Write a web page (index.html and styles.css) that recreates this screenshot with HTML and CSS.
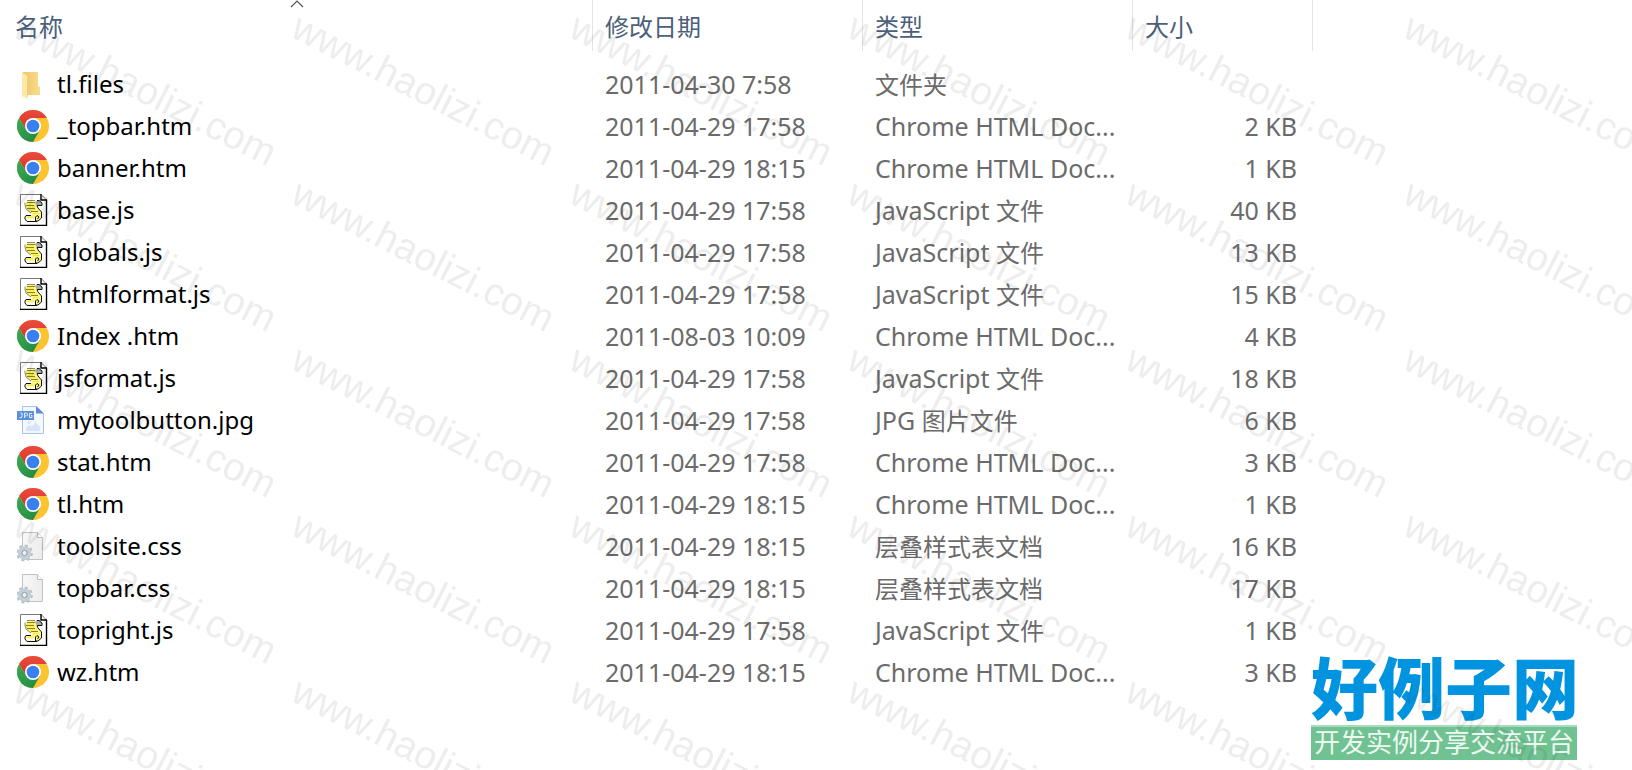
FILE: index.html
```html
<!DOCTYPE html>
<html lang="zh-CN">
<head>
<meta charset="utf-8">
<title>文件列表</title>
<link rel="stylesheet" href="styles.css">
</head>
<body>
<svg class="defs" aria-hidden="true">
  <defs>
    <linearGradient id="fold" x1="0" x2="1"><stop offset="0" stop-color="#ecc76c"/><stop offset="1" stop-color="#fbdc86"/></linearGradient>
    <linearGradient id="red" x1="0" x2="0" y1="0" y2="1"><stop offset="0" stop-color="#ea4a3d"/><stop offset="1" stop-color="#d9342a"/></linearGradient>
    <linearGradient id="green" x1="0" x2="1" y1="0" y2="1"><stop offset="0" stop-color="#3cac58"/><stop offset="1" stop-color="#1f8640"/></linearGradient>
    <linearGradient id="sheet" x1="0" x2="1"><stop offset="0" stop-color="#f8f8f8"/><stop offset="1" stop-color="#ececec"/></linearGradient>
    <symbol id="folder" viewBox="0 0 32 32">
      <path d="M6 4H21V18L23 19V27H6Z" fill="url(#fold)"/>
      <path d="M5 4 10.500 8V31L5 28Z" fill="#ffe7a6"/>
      <path d="M10.500 8V29" stroke="#e8c477" stroke-width=".6"/>
    </symbol>
    <symbol id="chrome" viewBox="0 0 32 32">
      <circle cx="16" cy="16" r="16" fill="#fcc42f"/>
      <path d="M2.140 8A16 16 0 0 1 29.860 8H16L9.070 20Z" fill="url(#red)"/>
      <path d="M2.140 8A16 16 0 0 0 16 32L22.930 20H9.070Z" fill="url(#green)"/>
      <circle cx="16" cy="16" r="8" fill="#fff"/>
      <circle cx="16" cy="16" r="6.300" fill="#3780ee"/>
    </symbol>
    <symbol id="script" viewBox="0 0 32 32">
      <path d="M3.500.500H24L29.500 6V31.500H3.500Z" fill="#fff" stroke="#777"/>
      <path d="M24 0V6H30M29.500 6V31.500H3" fill="none" stroke="#000" stroke-width="1.400"/>
      <path d="M10 7H22L19 10L21 14L24 18V24L21 27H10L9 22H14L15 20L9 16L8 11Z" fill="#fbf68a"/>
      <path d="M10 8.500H18M9 11.500H17M10 14.500H18M14 17.500H21" stroke="#8a8412"/>
      <path d="M9 10H17M9 13H17M12 16H20M16 19.500H22M10 23H16" stroke="#f5e93a"/>
      <path d="M10 24.500H18V26.500H10Z" fill="#fff"/>
      <path d="M18 8 20 6.500H22L25 9V11.500H20L19 10Z" fill="#aaa"/>
      <path d="M10 6.500H18M8 8.500V11L9 15 14 19" fill="none" stroke="#888"/>
      <path d="M20 6.500H22L25 9V11.500H20L21 14L24.500 18V24L21 27H18.500V23L20 21.500 22 23 20.500 25M14 21.500H9L8 23V25L10 27.500H20" fill="none" stroke="#111"/>
    </symbol>
    <symbol id="image" viewBox="0 0 32 32">
      <path d="M5.500 2.500H19.500L26.500 9.500V29.500H5.500Z" fill="#f5f9ff" stroke="#aac4ee"/>
      <path d="M19 2V9.500H27Z" fill="#5a8ed8"/>
      <path d="M9 27V24L12 21L15 22.500 18.500 18 23 23V27Z" fill="#d5e4fa"/><circle cx="12" cy="18.500" r="1.500" fill="#d5e4fa"/>
      <path d="M0 7H17V16H0Z" fill="#5a90dc"/>
      <path d="M3.500 9H5V13L4 14 2.500 13.500M7.500 14V9H9.500L10.500 10V11L9.500 12H7.500M15 9.500H12.500V13.500H15V11.500H14" fill="none" stroke="#e2eeff"/>
    </symbol>
    <symbol id="style" viewBox="0 0 32 32">
      <path d="M5.500 2.500H20.500L25.500 7.500V29.500H5.500Z" fill="url(#sheet)" stroke="#c2c2c2"/>
      <path d="M20.500 2.500V7.500H25.500" fill="#fff" stroke="#bbb"/>
      <circle cx="7.500" cy="23" r="7" fill="none" stroke="#b9c5cd" stroke-width="3" stroke-dasharray="3 2.500"/>
      <circle cx="7.500" cy="23" r="4.700" fill="none" stroke="#c3ced5" stroke-width="4"/>
      <circle cx="7.500" cy="23" r="2.600" fill="#eef1f3" stroke="#8b9aa5"/>
    </symbol>
  </defs>
</svg>

<main class="listing">
<table class="files">
  <colgroup><col class="col-name"><col class="col-date"><col class="col-type"><col class="col-size"><col></colgroup>
  <thead>
    <tr>
      <th aria-sort="ascending"><button class="sort" type="button">名称</button><svg class="arrow" viewBox="0 0 14 8" aria-hidden="true"><path d="M1 7 7 1 13 7"/></svg></th>
      <th><button class="sort" type="button">修改日期</button></th>
      <th><button class="sort" type="button">类型</button></th>
      <th><button class="sort" type="button">大小</button></th>
      <th class="rest"></th>
    </tr>
  </thead>
  <tbody>
    <tr><td><div class="file"><svg><use href="#folder"/></svg>tl.files</div></td><td>2011-04-30 7:58</td><td><span class="cjk">文件夹</span></td><td></td></tr>
    <tr><td><div class="file"><svg><use href="#chrome"/></svg>_topbar.htm</div></td><td>2011-04-29 17:58</td><td>Chrome HTML Doc...</td><td>2 KB</td></tr>
    <tr><td><div class="file"><svg><use href="#chrome"/></svg>banner.htm</div></td><td>2011-04-29 18:15</td><td>Chrome HTML Doc...</td><td>1 KB</td></tr>
    <tr><td><div class="file"><svg><use href="#script"/></svg>base.js</div></td><td>2011-04-29 17:58</td><td>JavaScript <span class="cjk">文件</span></td><td>40 KB</td></tr>
    <tr><td><div class="file"><svg><use href="#script"/></svg>globals.js</div></td><td>2011-04-29 17:58</td><td>JavaScript <span class="cjk">文件</span></td><td>13 KB</td></tr>
    <tr><td><div class="file"><svg><use href="#script"/></svg>htmlformat.js</div></td><td>2011-04-29 17:58</td><td>JavaScript <span class="cjk">文件</span></td><td>15 KB</td></tr>
    <tr><td><div class="file"><svg><use href="#chrome"/></svg>Index .htm</div></td><td>2011-08-03 10:09</td><td>Chrome HTML Doc...</td><td>4 KB</td></tr>
    <tr><td><div class="file"><svg><use href="#script"/></svg>jsformat.js</div></td><td>2011-04-29 17:58</td><td>JavaScript <span class="cjk">文件</span></td><td>18 KB</td></tr>
    <tr><td><div class="file"><svg><use href="#image"/></svg>mytoolbutton.jpg</div></td><td>2011-04-29 17:58</td><td>JPG <span class="cjk">图片文件</span></td><td>6 KB</td></tr>
    <tr><td><div class="file"><svg><use href="#chrome"/></svg>stat.htm</div></td><td>2011-04-29 17:58</td><td>Chrome HTML Doc...</td><td>3 KB</td></tr>
    <tr><td><div class="file"><svg><use href="#chrome"/></svg>tl.htm</div></td><td>2011-04-29 18:15</td><td>Chrome HTML Doc...</td><td>1 KB</td></tr>
    <tr><td><div class="file"><svg><use href="#style"/></svg>toolsite.css</div></td><td>2011-04-29 18:15</td><td><span class="cjk">层叠样式表文档</span></td><td>16 KB</td></tr>
    <tr><td><div class="file"><svg><use href="#style"/></svg>topbar.css</div></td><td>2011-04-29 18:15</td><td><span class="cjk">层叠样式表文档</span></td><td>17 KB</td></tr>
    <tr><td><div class="file"><svg><use href="#script"/></svg>topright.js</div></td><td>2011-04-29 17:58</td><td>JavaScript <span class="cjk">文件</span></td><td>1 KB</td></tr>
    <tr><td><div class="file"><svg><use href="#chrome"/></svg>wz.htm</div></td><td>2011-04-29 18:15</td><td>Chrome HTML Doc...</td><td>3 KB</td></tr>
  </tbody>
</table>
<div class="brand"><div class="brand-name">好例子网</div><div class="brand-tag">开发实例分享交流平台</div></div>
<svg class="watermark" aria-hidden="true">
  <defs><pattern id="mark" x="7" y="10" width="278" height="166" patternUnits="userSpaceOnUse"><text class="mark-text" transform="translate(4 26) rotate(27)">www.haolizi.com</text></pattern></defs>
  <rect width="100%" height="100%" fill="url(#mark)"/>
</svg>
</main>
</body>
</html>
```
FILE: styles.css
```css
* { box-sizing: border-box; }
body {
  margin: 0;
  background: #fff;
  color: #6b6b6b;
  font: 25px/42px "Noto Sans", "Noto Sans CJK SC", sans-serif;
}
.defs { position: absolute; width: 0; height: 0; }
.listing { position: relative; min-height: 100vh; overflow: hidden; }
.files { width: 100%; table-layout: fixed; border-collapse: separate; border-spacing: 0; }
.col-name { width: 593px; }
.col-date, .col-type { width: 270px; }
.col-size { width: 180px; }
.files th {
  position: relative;
  height: 51px;
  padding: 0;
  border-right: 1px solid #e3e3e3;
}
.files .rest { border-right: 0; }
.sort {
  display: block;
  width: 100%;
  height: 51px;
  padding: 0 12px;
  border: 0;
  background: none;
  color: #4c607a;
  font: 24px/42px "Noto Sans CJK SC", sans-serif;
  text-align: left;
}
th:first-child .sort { padding-left: 15px; }
.arrow {
  position: absolute;
  top: 0;
  left: 50%;
  width: 14px;
  height: 8px;
  margin-left: -6px;
  fill: none;
  stroke: #555;
  stroke-width: 1.2;
}
.files tbody::before { content: ""; display: block; height: 12px; }
.files td { height: 42px; padding: 0 12px; white-space: nowrap; line-height: 40px; }
.files td:first-child { padding-left: 17px; line-height: 42px; }
.files td:nth-child(4) { padding-right: 16px; text-align: right; }
.file { display: flex; align-items: center; gap: 8px; color: #000; font-size: 24px; }
.file svg { flex: none; width: 32px; height: 32px; }
.cjk { font-family: "Noto Sans CJK SC", sans-serif; font-size: 24px; line-height: 24px; }
.brand { position: absolute; right: 55px; bottom: 10px; width: 266px; }
.brand-name {
  padding-bottom: 4px;
  color: #0094e0;
  font: 900 67px/72px "Noto Sans CJK SC", sans-serif;
  white-space: nowrap;
}
.brand-tag {
  padding-bottom: 5px;
  border-top: 2px solid #a9dcbf;
  background: #70c293;
  color: #edf9f1;
  font: 26px/28px "Noto Sans CJK SC", sans-serif;
  text-align: center;
  white-space: nowrap;
}
.watermark { position: absolute; inset: 0; width: 100%; height: 100%; pointer-events: none; }
.mark-text { font: 39px "Liberation Sans", sans-serif; fill: #000; fill-opacity: .07; }
```
